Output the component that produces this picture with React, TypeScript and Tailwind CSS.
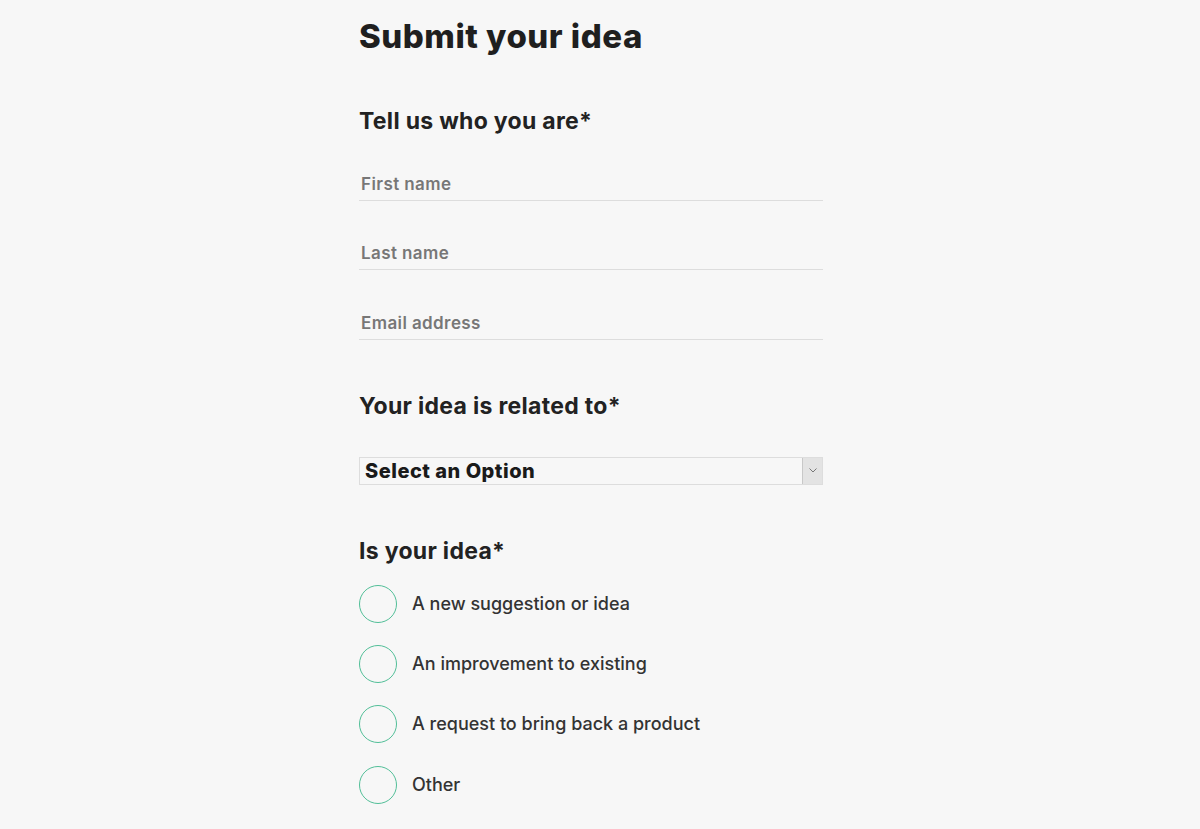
import React from "react";

const font = { fontFamily: "Inter, 'Noto Sans', sans-serif" };

function Field({ label }: { label: string }) {
  return (
    <div className="h-[69.5px] flex flex-col justify-end">
      <div className="border-b border-[#dddddd] pb-[6px] pl-[2px] text-[17px] font-semibold tracking-[0.4px] text-[#777777] leading-[20px]">
        {label}
      </div>
    </div>
  );
}

function Radio({ label }: { label: string }) {
  return (
    <div className="flex items-center h-[60.3px]">
      <span className="w-[38px] h-[38px] rounded-full border-[1.5px] border-[#52bf98] shrink-0" />
      <span className="ml-[15px] text-[18px] font-medium text-[#333333] leading-[22px]">{label}</span>
    </div>
  );
}

export default function App() {
  return (
    <div className="min-h-[829px] w-full bg-[#f7f7f7]" style={font}>
      <div className="w-[464px] ml-[359px]">
        <h1 className="pt-[16px] text-[33px] font-extrabold tracking-[0.5px] text-[#1f1f1f] leading-[40px]">
          Submit your idea
        </h1>
        <h2 className="mt-[50px] text-[23px] font-bold tracking-[0.3px] text-[#222222] leading-[30px]">
          Tell us who you are*
        </h2>
        <div className="-mt-[5px]">
          <Field label="First name" />
          <Field label="Last name" />
          <Field label="Email address" />
        </div>
        <h2 className="mt-[51px] text-[23px] font-bold tracking-[0.3px] text-[#222222] leading-[30px]">
          Your idea is related to*
        </h2>
        <div className="mt-[36px] h-[28px] border border-[#dddddd] flex items-center justify-between bg-[#f7f7f7]">
          <span className="pl-[5px] text-[20px] font-extrabold tracking-[0.5px] text-[#1a1a1a] leading-[22px]">
            Select an Option
          </span>
          <span className="w-[20px] h-[26px] bg-[#e3e3e3] border-l border-[#c8c8c8] flex items-center justify-center">
            <svg width="8" height="5" viewBox="0 0 8 5">
              <path d="M0.5 0.5 L4 4 L7.5 0.5" stroke="#777" strokeWidth="1" fill="none" />
            </svg>
          </span>
        </div>
        <h2 className="mt-[51px] text-[23px] font-bold tracking-[0.3px] text-[#222222] leading-[30px]">
          Is your idea*
        </h2>
        <div className="mt-[8px]">
          <Radio label="A new suggestion or idea" />
          <Radio label="An improvement to existing" />
          <Radio label="A request to bring back a product" />
          <Radio label="Other" />
        </div>
      </div>
    </div>
  );
}
